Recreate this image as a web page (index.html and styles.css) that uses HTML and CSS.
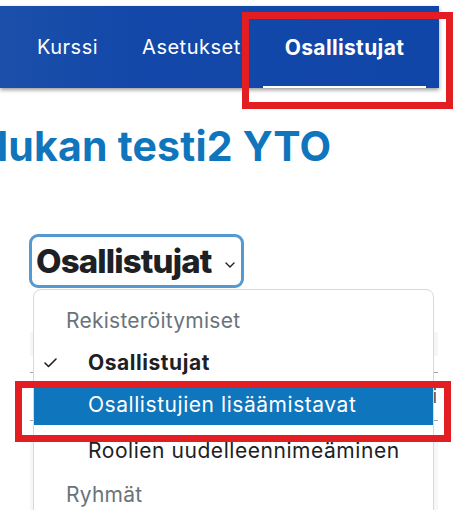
FILE: index.html
```html
<!DOCTYPE html>
<html lang="fi">
<head>
<meta charset="utf-8">
<title>Osallistujat</title>
<link rel="stylesheet" href="styles.css">
</head>
<body>
<div class="page">
  <nav class="topnav">
    <a class="nav-item">Kurssi</a>
    <a class="nav-item">Asetukset</a>
    <a class="nav-item active">Osallistujat</a>
  </nav>

  <h1 class="title">lukan testi2 YTO</h1>

  <div class="tertiary">
    <button class="select-btn">
      <span class="select-label">Osallistujat</span>
      <svg class="chev" width="10" height="6" viewBox="0 0 10 6"><polyline points="1,1 5,5 9,1" fill="none" stroke="#1d2125" stroke-width="1.4" stroke-linecap="round" stroke-linejoin="round"/></svg>
    </button>

    <div class="under">
      <div class="filterbar"></div>
      <div class="urow short"></div>
      <div class="urow tall"><span class="utext">Ei</span></div>
      <div class="ugap"></div>
      <div class="ufill"></div>
    </div>

    <div class="menu">
      <div class="menu-header">Rekisteröitymiset</div>
      <div class="menu-item checked">
        <svg class="check" width="13" height="10" viewBox="0 0 13 10"><polyline points="1,5 4.5,8.5 12,1" fill="none" stroke="#1d2125" stroke-width="1.6" stroke-linecap="round" stroke-linejoin="round"/></svg>
        Osallistujat
      </div>
      <div class="menu-item active">Osallistujien lisäämistavat</div>
      <div class="menu-item lower">Roolien uudelleennimeäminen</div>
      <div class="menu-sep"></div>
      <div class="menu-header">Ryhmät</div>
    </div>
  </div>

  <div class="mark mark-nav"></div>
  <div class="mark mark-item"></div>
</div>
</body>
</html>
```

FILE: styles.css
```css
html, body {
  margin: 0;
  padding: 0;
  background: #ffffff;
}

body {
  font-family: "Inter", "Open Sans", sans-serif;
  color: #1d2125;
  overflow: hidden;
}

.page {
  position: relative;
  width: 439px;
  height: 510px;
}

/* top navigation */
.topnav {
  display: flex;
  align-items: stretch;
  height: 82px;
  margin-top: 6px;
  padding-left: 15px;
  background: linear-gradient(90deg, #1b4faa 0%, #1348a9 30%, #1046a8 100%);
  box-shadow: 0 2px 4px rgba(0, 0, 0, 0.4);
}

.nav-item {
  position: relative;
  display: flex;
  align-items: center;
  padding: 0 22px;
  color: #ffffff;
  font-size: 20px;
  font-weight: 400;
  letter-spacing: 0.5px;
  white-space: nowrap;
}

.nav-item.active {
  font-size: 21px;
  font-weight: 700;
  letter-spacing: 0.35px;
}

.nav-item.active::after {
  content: "";
  position: absolute;
  left: 0;
  right: 0;
  bottom: 0;
  height: 2px;
  background: #ffffff;
}

/* page title */
.title {
  margin: 34px 0 0 -3px;
  font-size: 41px;
  line-height: 48px;
  font-weight: 700;
  letter-spacing: 0.2px;
  color: #0f75bc;
  white-space: nowrap;
}

/* tertiary navigation */
.tertiary {
  position: relative;
  margin-top: 64px;
}

.select-btn {
  display: flex;
  align-items: center;
  gap: 13px;
  box-sizing: border-box;
  height: 54px;
  margin-left: 29px;
  padding: 0 6px 0 4px;
  border: 3px solid #5499d0;
  border-radius: 9px;
  background: #ffffff;
  font-family: inherit;
  font-size: 33px;
  font-weight: 800;
  letter-spacing: -0.85px;
  color: #1d2125;
}

.select-label {
  line-height: 1;
}

.chev {
  margin-top: 8px;
}

/* content under the dropdown */
.under {
  margin: 44px 0 0 30px;
  width: 408px;
}

.filterbar {
  height: 24px;
  background: #f5f6f8;
}

.urow {
  border-bottom: 1px solid #9aa0a6;
}

.urow.short {
  height: 16px;
}

.urow.tall {
  height: 47px;
  display: flex;
  align-items: center;
  justify-content: flex-end;
}

.utext {
  font-size: 19px;
  color: #555;
  padding-right: 1px;
}

.ugap {
  height: 18px;
}

.ufill {
  height: 80px;
  background: #f6f7f9;
}

/* dropdown menu */
.menu {
  position: absolute;
  left: 33px;
  top: 55px;
  width: 401px;
  box-sizing: border-box;
  padding-top: 10px;
  padding-bottom: 20px;
  background: #ffffff;
  border: 1px solid #d7d8da;
  border-radius: 8px;
}

.menu-header {
  height: 41px;
  display: flex;
  align-items: center;
  padding-left: 32px;
  font-size: 21px;
  letter-spacing: 0.25px;
  color: #6a737b;
}

.menu-item {
  position: relative;
  height: 42px;
  display: flex;
  align-items: center;
  padding-left: 54px;
  font-size: 21px;
  letter-spacing: 0.55px;
  color: #1d2125;
  white-space: nowrap;
}

.menu-item.lower {
  height: 44px;
  padding-top: 6px;
  box-sizing: border-box;
}

.menu-item.checked {
  font-weight: 700;
}

.menu-item.active {
  background: #0f75bc;
  color: #ffffff;
}

.check {
  position: absolute;
  left: 10px;
  top: 17px;
}

.menu-sep {
  height: 5px;
}

/* red annotation frames */
.mark {
  position: absolute;
  box-sizing: border-box;
  border: 7px solid #e31e22;
  pointer-events: none;
}

.mark-nav {
  left: 242px;
  top: 6px;
  width: 211px;
  height: 97px;
}

.mark-item {
  left: 15px;
  top: 375px;
  width: 436px;
  height: 61px;
}
```
